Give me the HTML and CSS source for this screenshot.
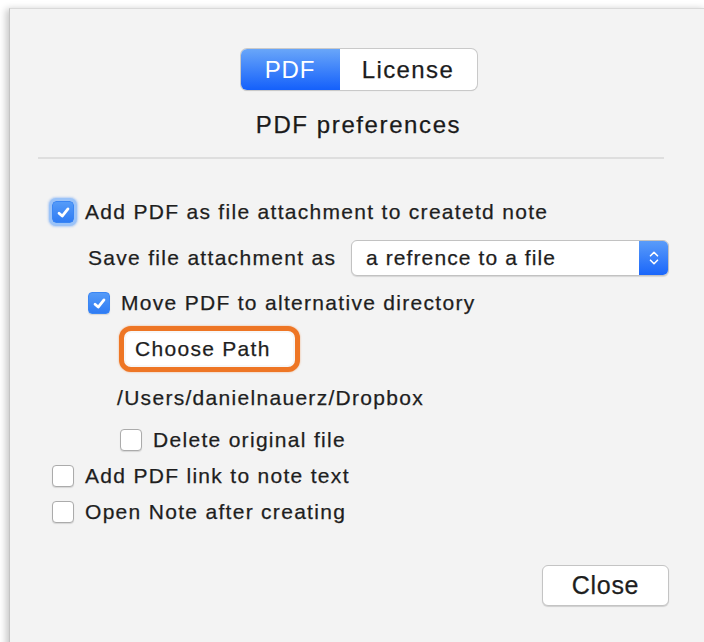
FILE: index.html
```html
<!DOCTYPE html>
<html lang="en">
<head>
<meta charset="utf-8">
<title>Preferences</title>
<link rel="stylesheet" href="styles.css">
</head>
<body>
<div class="window">
  <div class="tabs-wrap">
    <div class="tabs">
      <span class="tab tab-active">PDF</span>
      <span class="tab">License</span>
    </div>
  </div>
  <h1 class="title">PDF preferences</h1>
  <div class="separator"></div>

  <div class="form">
    <label class="row row-check">
      <span class="box box-on box-focus">
        <svg viewBox="0 0 16 16" class="tick"><path d="M3.8 8.6 L6.8 11.4 L12.2 4.6" /></svg>
      </span>
      <span class="label">Add PDF as file attachment to createtd note</span>
    </label>

    <div class="row row-popup indent-1">
      <span class="label plain">Save file attachment as</span>
      <div class="popup">
        <span class="popup-value">a refrence to a file</span>
        <span class="popup-arrows">
          <svg viewBox="0 0 16 24" class="chevrons"><path d="M4 9.5 L8 5.5 L12 9.5 M4 14.5 L8 18.5 L12 14.5" /></svg>
        </span>
      </div>
    </div>

    <label class="row row-check indent-1 row-move">
      <span class="box box-on">
        <svg viewBox="0 0 16 16" class="tick"><path d="M3.8 8.6 L6.8 11.4 L12.2 4.6" /></svg>
      </span>
      <span class="label">Move PDF to alternative directory</span>
    </label>

    <div class="row row-button indent-2">
      <button class="button button-focus" type="button">Choose Path</button>
    </div>

    <div class="row row-path indent-2">
      <span class="label plain">/Users/danielnauerz/Dropbox</span>
    </div>

    <label class="row row-check indent-2 row-delete">
      <span class="box"></span>
      <span class="label">Delete original file</span>
    </label>

    <label class="row row-check row-tight">
      <span class="box"></span>
      <span class="label">Add PDF link to note text</span>
    </label>

    <label class="row row-check row-tight">
      <span class="box"></span>
      <span class="label">Open Note after creating</span>
    </label>

    <div class="actions">
      <button class="button button-close" type="button">Close</button>
    </div>
  </div>
</div>
</body>
</html>
```

FILE: styles.css
```css
html, body {
  margin: 0;
  padding: 0;
  background: #ffffff;
  overflow: hidden;
}

body {
  width: 704px;
  height: 642px;
  font-family: "Liberation Sans", Arial, sans-serif;
  color: #1e1e1e;
  -webkit-text-stroke: 0.25px currentColor;
}

.window {
  margin: 8px 0 0 9px;
  width: 697px;
  height: 660px;
  background: #f3f3f3;
  border-left: 1px solid #c4c4c4;
  border-top: 1px solid #d9d9d9;
  box-shadow: -3px 1px 7px rgba(0, 0, 0, 0.22);
  display: flex;
  flex-direction: column;
}

/* segmented control */
.tabs-wrap {
  display: flex;
  justify-content: center;
  margin-top: 40px;
}

.tabs {
  display: flex;
  height: 41px;
  border-radius: 6px;
  background: #ffffff;
  box-shadow: 0 0 0 1px #c9c9c9, 0 1px 1px rgba(0, 0, 0, 0.18);
  overflow: hidden;
}

.tab {
  display: flex;
  align-items: center;
  justify-content: center;
  font-size: 24px;
  letter-spacing: 1.4px;
  color: #1c1c1c;
  width: 137px;
}

.tab-active {
  width: 99px;
  color: #ffffff;
  letter-spacing: 0.8px;
  -webkit-text-stroke: 0;
  background: linear-gradient(#69a6f9, #1460fb);
}

.title {
  margin: 21px 0 0;
  height: 28px;
  line-height: 28px;
  text-align: center;
  font-size: 24px;
  font-weight: normal;
  letter-spacing: 1.6px;
  color: #1a1a1a;
}

.separator {
  margin: 18px 0 0 28px;
  width: 626px;
  height: 2px;
  background: #dedede;
}

/* form rows */
.form {
  margin-left: 42px;
  width: 617px;
  display: flex;
  flex-direction: column;
}

.row {
  display: flex;
  align-items: center;
  height: 30px;
}

.row-check:first-child {
  margin-top: 38px;
}

.indent-1 { padding-left: 36px; }
.indent-2 { padding-left: 68px; }

.label {
  font-size: 21px;
  letter-spacing: 1.3px;
  color: #1e1e1e;
  white-space: nowrap;
}

.box {
  flex: none;
  width: 20px;
  height: 20px;
  border: 1px solid #ababab;
  border-radius: 4px;
  background: #ffffff;
  box-shadow: 0 1px 1px rgba(0, 0, 0, 0.12);
  margin-right: 11px;
  display: flex;
  align-items: center;
  justify-content: center;
}

.box-on {
  border-color: #3a86f4;
  background: linear-gradient(#559bf8, #2f7cf4);
}

.box-focus {
  box-shadow: 0 0 0 3px #9bc3f8, 0 0 2px 4px rgba(110, 165, 245, 0.45);
}

.tick {
  width: 17px;
  height: 17px;
  fill: none;
  stroke: #ffffff;
  stroke-width: 2.6;
  stroke-linecap: round;
  stroke-linejoin: round;
}

.row-popup {
  height: 36px;
  margin-top: 13px;
  justify-content: space-between;
}

.popup {
  width: 316px;
  height: 34px;
  border: 1px solid #c2c2c2;
  border-radius: 6px;
  background: #ffffff;
  box-shadow: 0 1px 1px rgba(0, 0, 0, 0.12);
  display: flex;
  align-items: center;
  overflow: hidden;
}

.popup-value {
  flex: 1;
  padding-left: 14px;
  font-size: 21px;
  letter-spacing: 1.1px;
  color: #1e1e1e;
}

.popup-arrows {
  width: 29px;
  height: 100%;
  background: linear-gradient(#5a9cf9, #1a66fa);
  display: flex;
  align-items: center;
  justify-content: center;
}

.chevrons {
  width: 14px;
  height: 22px;
  fill: none;
  stroke: #ffffff;
  stroke-width: 1.8;
  stroke-linecap: round;
  stroke-linejoin: round;
}

.row-move {
  margin-top: 12px;
}

.row-button {
  height: 48px;
  margin-top: 7px;
  padding-left: 67px;
}

.button {
  box-sizing: border-box;
  font-family: "Liberation Sans", Arial, sans-serif;
  font-size: 21px;
  letter-spacing: 1.3px;
  color: #1e1e1e;
  -webkit-text-stroke: 0.25px currentColor;
  background: #ffffff;
  border: 1px solid #c4c4c4;
  border-radius: 6px;
  box-shadow: 0 1px 1px rgba(0, 0, 0, 0.15);
  padding: 0;
  cursor: default;
}

.button-focus {
  width: 181px;
  height: 46px;
  text-align: left;
  padding-left: 11px;
  border: 5px solid #ee7625;
  border-radius: 12px;
  box-shadow: 0 0 2px rgba(238, 118, 37, 0.6), inset 0 0 0 2px #f7f7f7;
}

.row-path {
  margin-top: 10px;
  padding-left: 65px;
}

.row-delete {
  margin-top: 12px;
}

.row-tight {
  margin-top: 6px;
}

.actions {
  display: flex;
  justify-content: flex-end;
  margin-top: 38px;
}

.button-close {
  width: 127px;
  height: 41px;
  font-size: 25px;
  letter-spacing: 0.7px;
}
```
